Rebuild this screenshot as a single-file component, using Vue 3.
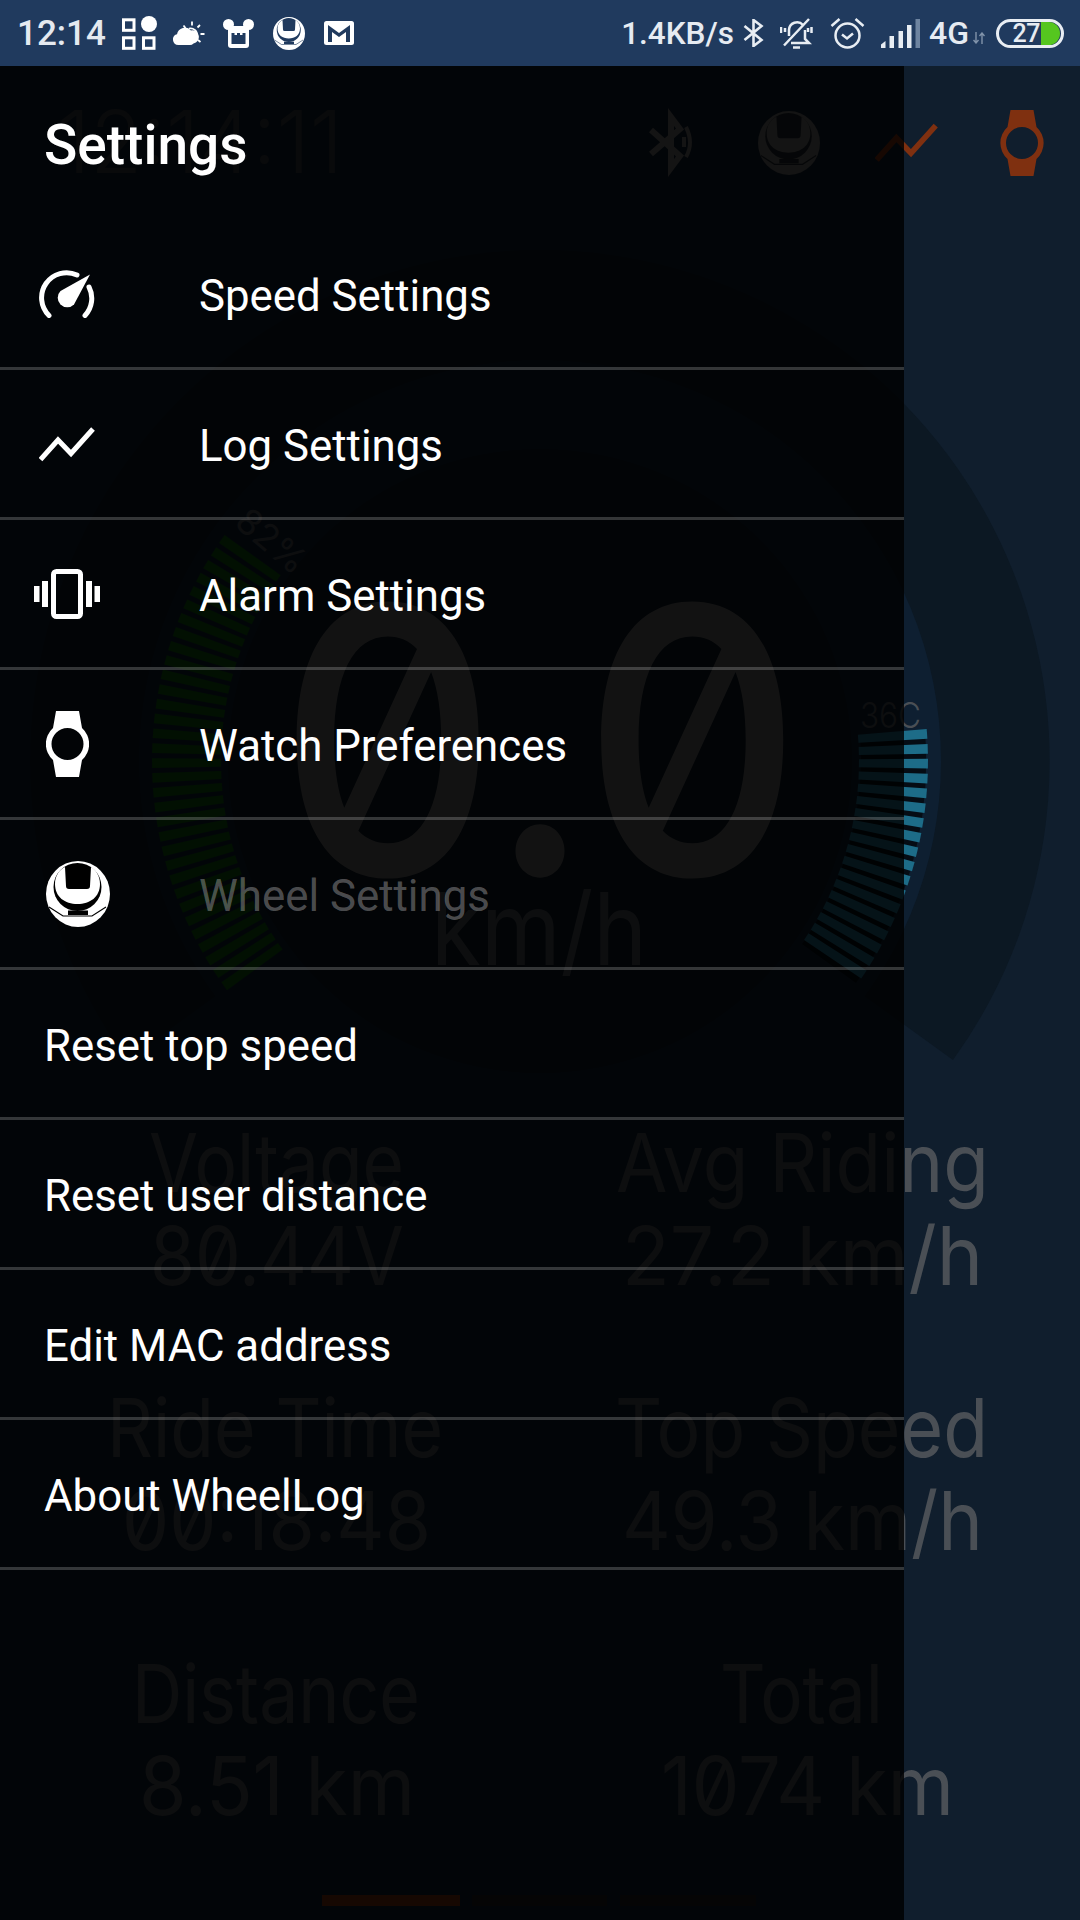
<template>
  <div class="screen">
    <!-- shared icon shapes -->
    <svg class="defs" width="0" height="0">
      <symbol id="i-watch" viewBox="0 0 43 66">
        <path fill="currentColor" fill-rule="evenodd" d="M10 0H33L36 17A21.5 21.5 0 0 1 36 49L33 66H10L7 49A21.5 21.5 0 0 1 7 17ZM21.5 17a16 16 0 1 0 0 32a16 16 0 0 0 0-32Z" />
      </symbol>
      <symbol id="i-trend" viewBox="0 0 56 36">
        <polyline points="1.5,33.5 19,14 32,27.5 54,3" fill="none" stroke="currentColor" stroke-width="5" />
      </symbol>
      <symbol id="i-wheel" viewBox="0 0 64 66">
        <ellipse cx="32" cy="33" rx="32" ry="33" fill="currentColor" />
        <circle class="cut" cx="31.5" cy="26" r="24" />
        <path fill="currentColor" d="M9 23C9 36 19 43 31.5 43S54 36 54 23C54 15 50 9 45 6L44 25Q44 28 41 28H23Q20 28 20 25L19 6C13 9 9 15 9 23Z" />
        <path class="cut-line" d="M3 46L17 55H46L60 46" />
        <rect class="cut" x="22" y="49.5" width="20" height="4.5" />
      </symbol>
    </svg>

    <header class="status-bar">
      <div class="status-left">
        <span class="clock">12:14</span>
        <svg class="s-grid" width="35" height="34" viewBox="0 0 35 34">
          <g fill="none" stroke="#fff" stroke-width="3">
            <rect x="1.5" y="3.8" width="10.5" height="10.5" />
            <rect x="1.5" y="21.8" width="10.5" height="10.5" />
            <rect x="21.5" y="21.8" width="10.5" height="10.5" />
          </g>
          <circle cx="27" cy="8" r="8" fill="#fff" />
        </svg>
        <svg class="s-weather" width="32" height="24" viewBox="0 0 32 24">
          <path fill="#fff" d="M5.5 24A5.5 5.5 0 0 1 4 13.2A8 8 0 0 1 18 9.5A6.5 6.5 0 0 1 20.5 22.5Q19 24 17 24Z" />
          <g stroke="#fff" stroke-width="1.8" fill="none">
            <path d="M19 0.5v4M10.5 4.5l2 2.5M27 4l-2.5 2.5M31.5 13h-4M27.5 21l-2.5-2" />
            <path d="M16 7.5a6.5 6.5 0 0 1 8 7" />
          </g>
        </svg>
        <svg class="s-bear" width="31" height="29" viewBox="0 0 31 29">
          <circle cx="5.5" cy="5.5" r="5.5" fill="#fff" />
          <circle cx="25.5" cy="5.5" r="5.5" fill="#fff" />
          <path fill="#fff" d="M5 7H26V26Q26 29 23 29H8Q5 29 5 26Z" />
          <rect x="8.5" y="14" width="14" height="11" fill="#203a5e" />
          <rect x="11.5" y="12" width="2.5" height="4" fill="#fff" />
          <rect x="17" y="12" width="2.5" height="4" fill="#fff" />
        </svg>
        <svg class="s-wheel" width="32" height="33"><use href="#i-wheel" /></svg>
        <svg class="s-mail" width="30" height="24" viewBox="0 0 30 24">
          <rect width="30" height="24" rx="2.5" fill="#fff" />
          <path fill="#203a5e" d="M4 4L15 12L26 4V21H22V11L15 16L8 11V21H4Z" />
        </svg>
      </div>
      <div class="status-right">
        <span class="speed">1.4KB/s</span>
        <svg class="s-bt" width="21" height="28" viewBox="0 0 21 28">
          <path d="M1.5 7L18.5 21L10.5 27V1L18.5 7L1.5 21" fill="none" stroke="#e8edf3" stroke-width="2.6" />
        </svg>
        <svg class="s-bell" width="33" height="32" viewBox="0 0 33 32">
          <g fill="none" stroke="#e8edf3" stroke-width="2.5">
            <path d="M9 19V13A8 8 0 0 1 23 8M25 13V22L29 26H11" />
            <path d="M13 30.5H20M4 28.5L29 2" />
            <path d="M1 10V16M31.5 10V16" />
            <path d="M5 11V15M28 11V15" />
          </g>
        </svg>
        <svg class="s-alarm" width="35" height="32" viewBox="0 0 35 32">
          <g fill="none" stroke="#e8edf3" stroke-width="2.5">
            <circle cx="17.5" cy="18.5" r="12" />
            <path d="M1.5 9L9.5 2M33.5 9L25.5 2" />
            <path d="M12 17.5L17 21.5L23 16.5" />
          </g>
        </svg>
        <svg class="s-signal" width="40" height="29" viewBox="0 0 40 29">
          <path fill="#e8edf3" d="M1 29V25.5L5.5 22V29Z" />
          <rect x="9.5" y="17" width="4.5" height="12" fill="#e8edf3" />
          <rect x="18.5" y="12" width="4.5" height="17" fill="#e8edf3" />
          <rect x="27" y="6" width="4.5" height="23" fill="#e8edf3" />
          <rect x="35.5" y="0" width="4.5" height="29" fill="#6e84a0" />
        </svg>
        <span class="net">4G</span>
        <svg class="s-arrows" width="12" height="12" viewBox="0 0 12 12">
          <path d="M3 0V11M0.5 8L3 11L5.5 8M9 12V1M6.5 4L9 1L11.5 4" fill="none" stroke="#8193aa" stroke-width="1.4" />
        </svg>
        <div class="battery">
          <span class="battery-num">27</span>
          <span class="battery-fill"></span>
        </div>
      </div>
    </header>

    <main class="content">
      <svg class="dash" width="1080" height="1854" viewBox="0 66 1080 1854">
        <rect x="0" y="66" width="1080" height="1854" fill="#101e2d" />
        <path d="M540 761L953 1060A511 511 0 0 0 540 250Z" fill="#0c1823" />
        <path d="M540 761L127 1060A511 511 0 0 1 540 250Z" fill="#0c1823" />
        <circle cx="540" cy="761" r="401" fill="#0e1f31" />
        <circle cx="540" cy="761" r="312" fill="#0c1823" />
        <path d="M925 731A386 386 0 0 1 856 983L802 944A320 320 0 0 0 860 735Z" fill="#050c14" />
        <polygon v-for="(t, i) in greenTicks" :key="'g' + i" :points="t" fill="#0b5a0e" />
        <polygon v-for="(t, i) in tealTicks" :key="'t' + i" :points="t" fill="#1d6c88" />

        <text class="dim dim--faint" x="57" y="173" font-size="86" textLength="286" lengthAdjust="spacingAndGlyphs">12:14:11</text>
        <path d="M651 130L680 156L671 168V117L680 129L651 154" fill="none" stroke="#6e6e6e" stroke-width="6" />
        <path d="M686 127Q694 143 686 157M684 137V147" fill="none" stroke="#6e6e6e" stroke-width="4" />
        <use href="#i-wheel" class="bg-wheel" x="758" y="110" width="62" height="66" />
        <use href="#i-trend" class="bg-orange" x="875" y="122" width="63" height="41" />
        <use href="#i-watch" class="bg-orange" x="1000" y="110" width="44" height="66" />

        <text class="dim slashed big-speed" x="278" y="875" font-size="371" textLength="524" lengthAdjust="spacingAndGlyphs">0.0</text>
        <text class="dim" x="431" y="965" font-size="100" textLength="216" lengthAdjust="spacingAndGlyphs">km/h</text>
        <text class="dim" font-size="36" transform="translate(233 525) rotate(40)">82%</text>
        <text class="dim thin" font-size="36" x="860" y="728" textLength="61" lengthAdjust="spacingAndGlyphs">36C</text>

        <text
          v-for="s in stats"
          :key="s.text"
          class="dim slashed"
          :x="s.x"
          :y="s.y"
          font-size="81"
          :textLength="s.w"
          lengthAdjust="spacingAndGlyphs"
        >{{ s.text }}</text>

        <rect x="322" y="1895" width="138" height="11" fill="#7a2c0e" />
        <rect x="472" y="1895" width="135" height="11" fill="#1f1f1f" />
        <rect x="620" y="1895" width="136" height="11" fill="#1f1f1f" />
      </svg>

      <nav class="drawer">
        <h1 class="drawer-title">Settings</h1>
        <ul class="menu">
          <li class="menu-row">
            <span class="row-icon">
              <svg width="56" height="48" viewBox="0 0 56 48">
                <path d="M10 45.5A25 25 0 0 1 38 5M50 17A25 25 0 0 1 46 45.5" fill="none" stroke="#fff" stroke-width="5" stroke-linecap="round" />
                <path fill="#fff" d="M51 4.5L35 34.5A9 9 0 0 1 21.5 21Z" />
              </svg>
            </span>
            <span class="row-label">Speed Settings</span>
          </li>
          <li class="menu-row">
            <span class="row-icon">
              <svg class="white" width="56" height="36"><use href="#i-trend" /></svg>
            </span>
            <span class="row-label">Log Settings</span>
          </li>
          <li class="menu-row">
            <span class="row-icon">
              <svg width="66" height="50" viewBox="0 0 66 50">
                <rect x="19.5" y="2.5" width="27" height="45" rx="3" fill="none" stroke="#fff" stroke-width="5" />
                <g fill="#fff">
                  <rect x="8" y="12" width="6" height="26" />
                  <rect x="0" y="17" width="5.5" height="16" />
                  <rect x="52" y="12" width="6" height="26" />
                  <rect x="60.5" y="17" width="5.5" height="16" />
                </g>
              </svg>
            </span>
            <span class="row-label">Alarm Settings</span>
          </li>
          <li class="menu-row">
            <span class="row-icon">
              <svg class="white" width="43" height="66"><use href="#i-watch" /></svg>
            </span>
            <span class="row-label">Watch Preferences</span>
          </li>
          <li class="menu-row menu-row--disabled">
            <span class="row-icon">
              <svg class="white wheel-icon" width="64" height="66"><use href="#i-wheel" /></svg>
            </span>
            <span class="row-label">Wheel Settings</span>
          </li>
          <li v-for="label in plainItems" :key="label" class="menu-row menu-row--plain">
            <span class="row-label">{{ label }}</span>
          </li>
        </ul>
      </nav>
    </main>
  </div>
</template>

<script setup>
const CX = 540
const CY = 761

function tick(deg) {
  const half = 0.72
  const pt = (r, a) => {
    const rad = (a * Math.PI) / 180
    return `${(CX + r * Math.cos(rad)).toFixed(1)},${(CY + r * Math.sin(rad)).toFixed(1)}`
  }
  return [pt(319, deg - half), pt(388, deg - half), pt(388, deg + half), pt(319, deg + half)].join(' ')
}

function ticks(from, count) {
  return Array.from({ length: count }, (_, i) => tick(from + i * 2.2))
}

const tealTicks = ticks(-4, 18)
const greenTicks = ticks(144.5, 33)

const stats = [
  { text: 'Voltage', x: 149, y: 1192, w: 255 },
  { text: '80.44V', x: 150, y: 1285, w: 254 },
  { text: 'Avg Riding', x: 616, y: 1192, w: 373 },
  { text: '27.2 km/h', x: 622, y: 1285, w: 361 },
  { text: 'Ride Time', x: 107, y: 1457, w: 336 },
  { text: '00:18:48', x: 122, y: 1550, w: 309 },
  { text: 'Top Speed', x: 615, y: 1457, w: 373 },
  { text: '49.3 km/h', x: 622, y: 1550, w: 361 },
  { text: 'Distance', x: 132, y: 1723, w: 288 },
  { text: '8.51 km', x: 139, y: 1815, w: 276 },
  { text: 'Total', x: 720, y: 1723, w: 163 },
  { text: '1074 km', x: 661, y: 1815, w: 293 },
]

const plainItems = ['Reset top speed', 'Reset user distance', 'Edit MAC address', 'About WheelLog']
</script>

<style>
html,
body {
  margin: 0;
  background: #101e2d;
}
</style>

<style scoped>
.screen {
  width: 1080px;
  height: 1920px;
  overflow: hidden;
  display: flex;
  flex-direction: column;
  font-family: Roboto, "Liberation Sans", sans-serif;
  color: #fff;
}

.defs {
  position: absolute;
}

.cut {
  fill: var(--cut, #203a5e);
}

.cut-line {
  fill: none;
  stroke: var(--cut, #203a5e);
  stroke-width: 1.2;
}

.status-bar {
  flex: 0 0 66px;
  height: 66px;
  box-sizing: border-box;
  background: #203a5e;
  display: flex;
  align-items: center;
  justify-content: space-between;
  padding: 0 16px 0 17px;
  color: #e6ebf2;
}

.status-left,
.status-right {
  display: flex;
  align-items: center;
}

.status-bar svg {
  display: block;
  flex: none;
}

.clock {
  font-size: 35px;
  font-weight: 500;
  width: 88px;
  margin-right: 17px;
  color: #e4e9f0;
}

.s-grid {
  margin-right: 16px;
}

.s-weather {
  margin-right: 18px;
}

.s-bear {
  margin-right: 19px;
  color: #fff;
}

.s-wheel {
  margin-right: 19px;
  color: #fff;
}

.speed {
  font-size: 31.5px;
  font-weight: 500;
  margin-right: 9px;
}

.s-bt {
  margin-right: 16px;
}

.s-bell {
  margin-right: 17px;
}

.s-alarm {
  margin-right: 15px;
}

.s-signal {
  margin-right: 9px;
}

.net {
  font-size: 32px;
  font-weight: 500;
  margin-right: 4px;
}

.s-arrows {
  margin: 10px 11px 0 0;
}

.battery {
  width: 68px;
  height: 29px;
  box-sizing: border-box;
  border: 3px solid #e8edf3;
  border-radius: 15px;
  display: flex;
  align-items: center;
  justify-content: flex-end;
  padding-right: 1px;
}

.battery-num {
  font-size: 25px;
  font-weight: 500;
  margin-right: 1px;
  letter-spacing: -0.5px;
}

.battery-fill {
  width: 19px;
  height: 23px;
  background: #55c61f;
  border-radius: 0 12px 12px 0;
}

.content {
  position: relative;
  flex: 1;
  --cut: #20262c;
}

.dash {
  position: absolute;
  top: 0;
  left: 0;
}

.dim {
  fill: #4a4f55;
  font-family: Inter, Roboto, sans-serif;
}

.dim--faint {
  fill: #363a3e;
  font-weight: 300;
}

.thin {
  font-weight: 300;
}

.slashed {
  font-variant-numeric: slashed-zero;
}

.big-speed {
  fill: #666;
  font-weight: 500;
}

.bg-wheel {
  color: #6e6e6e;
}

.bg-orange {
  color: #7f3010;
}

.drawer {
  position: absolute;
  top: 0;
  left: 0;
  bottom: 0;
  width: 904px;
  background: rgba(0, 0, 0, 0.82);
}

.drawer-title {
  height: 154px;
  margin: 0;
  box-sizing: border-box;
  padding: 4px 0 0 44px;
  display: flex;
  align-items: center;
  font-size: 55px;
  font-weight: 500;
}

.menu {
  list-style: none;
  margin: 0;
  padding: 0;
}

.menu-row {
  height: 150px;
  box-sizing: border-box;
  border-bottom: 3px solid rgba(255, 255, 255, 0.2);
  display: flex;
  align-items: center;
  font-size: 43.8px;
}

.menu-row--plain {
  padding-left: 44px;
}

.menu-row--disabled {
  color: rgba(255, 255, 255, 0.3);
}

.row-label {
  margin-top: 5px;
}

.row-icon {
  width: 134px;
  margin-right: 65px;
  display: flex;
  justify-content: center;
}

.white {
  color: #fff;
}

.wheel-icon {
  margin-left: 21px;
  --cut: #000;
}
</style>
